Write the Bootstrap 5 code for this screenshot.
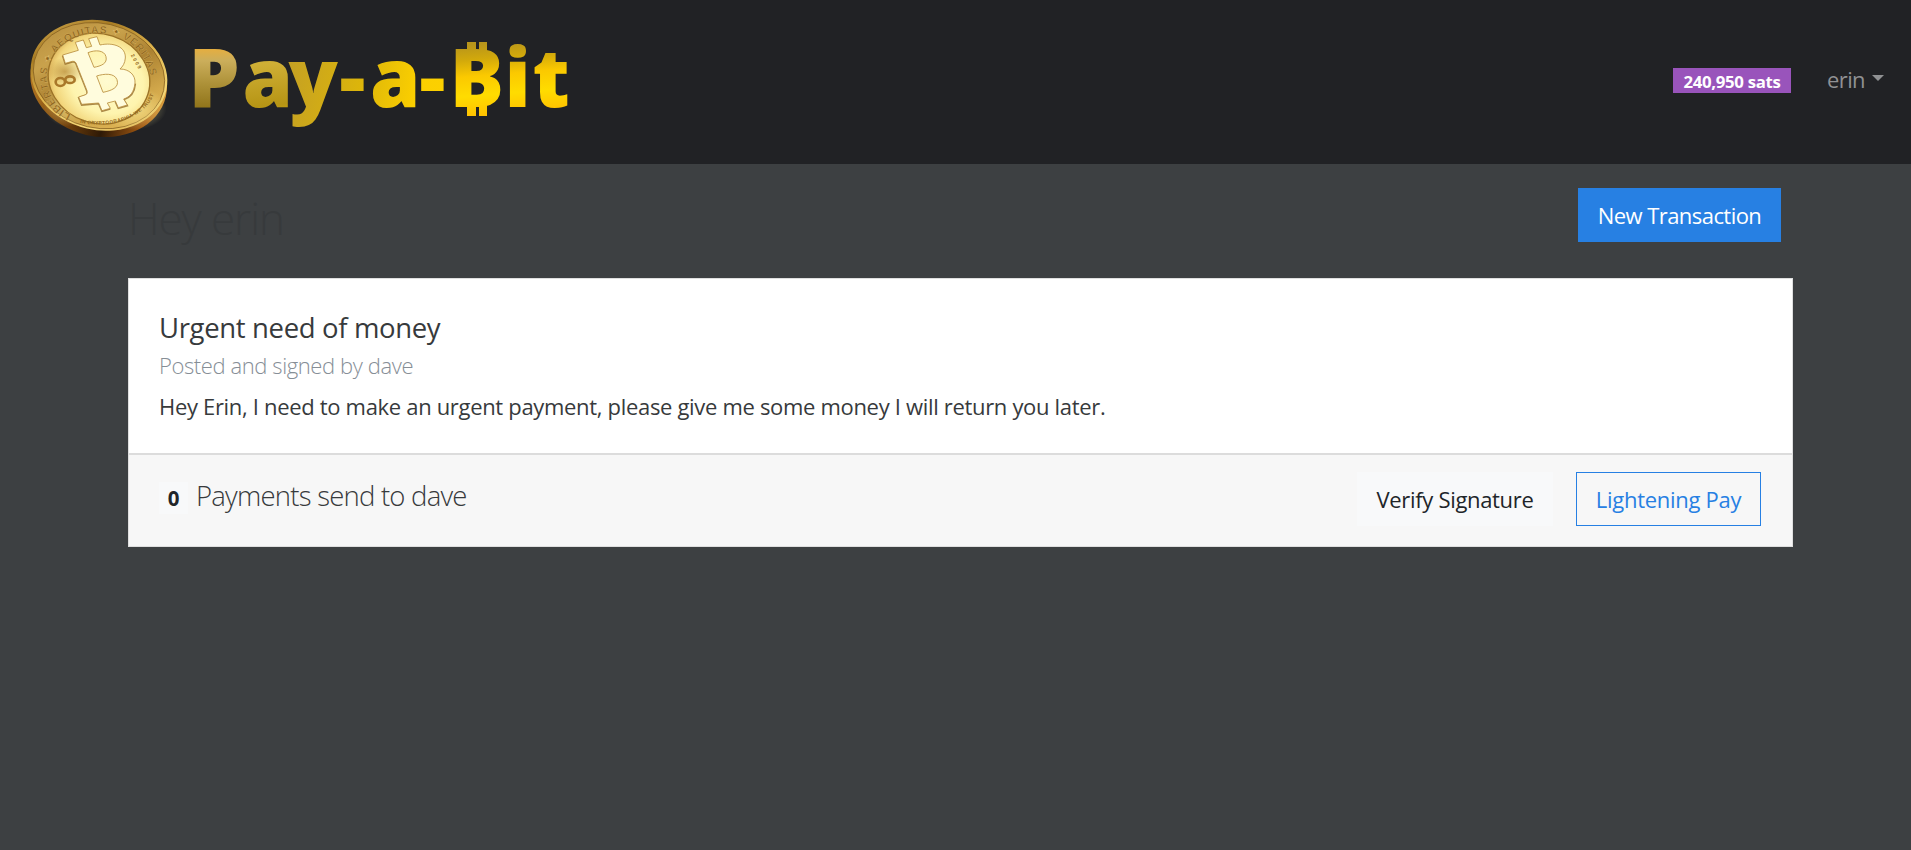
<!DOCTYPE html>
<html lang="en">
<head>
<meta charset="utf-8">
<meta name="viewport" content="width=device-width, initial-scale=1">
<title>Pay-a-Bit</title>
<link href="https://cdn.jsdelivr.net/npm/bootstrap@5.3.0/dist/css/bootstrap.min.css" rel="stylesheet">
<style>
body{background:#3d4042;color:#373a3c;font-family:"Open Sans","Noto Sans",sans-serif;font-size:22.5px;line-height:1.5;min-height:100vh}
.topbar{height:164px;background:#212225}
.topbar svg{display:block}
.sats{background:#9954bb;border-radius:0;width:118px;height:25px;font-size:16.8px;font-weight:700;line-height:25px;padding:1px 0 0;letter-spacing:-.3px;margin:0 36px 3px 0}
.user-link{color:#909193;letter-spacing:-.6px;font-size:22px;line-height:34px;margin:0 27px 6px 0}
.user-link::after{margin-left:7px;border-top-width:6.5px;border-left-width:6.5px;border-right-width:6.5px;vertical-align:7px}
.main-wrap{width:1665px;margin-left:128px}
.greeting{font-size:44px;font-weight:300;line-height:60px;height:54px;color:#373a3c;letter-spacing:-1.1px}
.btn{--bs-btn-border-radius:0;font-size:22px;line-height:34px;height:54px;padding:9px 0;white-space:nowrap}
.btn-new{width:203px;background:#2780e3;color:#fff;letter-spacing:-.55px;margin-right:12px}
.btn-verify{width:196px;background:#f8f9fa;color:#212529;letter-spacing:-.32px;margin-right:23px}
.btn-pay{width:185px;border:1px solid #2780e3;color:#2780e3;letter-spacing:-.28px}
.post{border-radius:0;border:1px solid #dfdfdf;height:269px;margin-top:36px}
.post .card-body{padding:32px 30px 0}
.post-title{font-size:27.5px;font-weight:400;line-height:34px;margin:0;letter-spacing:-.35px}
.post-sub{font-size:22px;font-weight:300;line-height:28px;color:#868e96;letter-spacing:-.4px;margin:6px 0 0}
.post-text{font-size:22px;line-height:34px;letter-spacing:-.32px;margin:10px 0 0}
.post .card-footer{height:93px;background:#f7f7f7;border-top:2px solid #dcdcdc;border-radius:0;padding:0 31px 3px 30px}
.count{background:#f8f9fa;color:#212529;border-radius:0;width:29px;height:32px;font-size:20.5px;line-height:32px;padding:0;margin:0 8px 2px 0}
.pay-label{font-size:27.5px;font-weight:300;line-height:34px;letter-spacing:-.77px;margin-top:-6px}
.logo-word{font:900 81px "Noto Sans","Open Sans",sans-serif}
.coin-ring{font:700 31px "Liberation Sans",sans-serif}
.coin-small{font:700 15px "Liberation Sans",sans-serif}
</style>
</head>
<body>
<nav class="topbar d-flex align-items-center">
  <a href="#" class="me-auto" aria-label="Pay-a-Bit">
  <svg width="600" height="164" viewBox="0 0 600 164">
    <defs>
      <linearGradient id="rim" x1="0" y1="0" x2="1" y2="1"><stop offset="0" stop-color="#d8b35a"/><stop offset=".25" stop-color="#a87c24"/><stop offset=".5" stop-color="#e0b64e"/><stop offset=".75" stop-color="#f5d878"/><stop offset="1" stop-color="#c9912d"/></linearGradient>
      <linearGradient id="ring" x1="0" y1="0" x2="1" y2="1"><stop offset="0" stop-color="#b3893a"/><stop offset=".3" stop-color="#c9a24c"/><stop offset=".5" stop-color="#ac8232"/><stop offset=".75" stop-color="#d5ab4d"/><stop offset="1" stop-color="#e8be5c"/></linearGradient>
      <linearGradient id="edge" x1="0" x2="1"><stop offset="0" stop-color="#b47722"/><stop offset=".35" stop-color="#70400c"/><stop offset=".6" stop-color="#2e1906"/><stop offset=".9" stop-color="#a85c12"/><stop offset="1" stop-color="#d89a38"/></linearGradient>
      <radialGradient id="face" cx=".58" cy=".5" r=".6"><stop offset="0" stop-color="#fffbd0"/><stop offset=".6" stop-color="#fef4ae"/><stop offset=".88" stop-color="#f2d67c"/><stop offset="1" stop-color="#d9ad55"/></radialGradient>
      <radialGradient id="shade"><stop offset="0" stop-color="#a8741f" stop-opacity=".6"/><stop offset="1" stop-color="#a8741f" stop-opacity="0"/></radialGradient>
      <radialGradient id="glow"><stop offset="0" stop-color="#fff3a0" stop-opacity=".9"/><stop offset="1" stop-color="#fff3a0" stop-opacity="0"/></radialGradient>
      <linearGradient id="gold" gradientUnits="userSpaceOnUse" x1="194" y1="48" x2="566" y2="110"><stop offset="0" stop-color="#c8a64e"/><stop offset=".25" stop-color="#c4a024"/><stop offset=".45" stop-color="#dcb50b"/><stop offset=".6" stop-color="#fbcf00"/><stop offset="1" stop-color="#ffd400"/></linearGradient>
      <linearGradient id="goldP" x1="218" y1="49" x2="218" y2="107" gradientUnits="userSpaceOnUse"><stop offset="0" stop-color="#e5ae40"/><stop offset=".2" stop-color="#cbae5b"/><stop offset=".6" stop-color="#ad9138"/><stop offset="1" stop-color="#91751b"/></linearGradient>
      <linearGradient id="goldB" x1="505" y1="42" x2="511" y2="117" gradientUnits="userSpaceOnUse"><stop offset="0" stop-color="#b8951b"/><stop offset=".2" stop-color="#d2a90b"/><stop offset=".42" stop-color="#fbc900"/><stop offset=".68" stop-color="#ffdc00"/><stop offset="1" stop-color="#ffbd00"/></linearGradient>
      <linearGradient id="golda" x1="265" y1="64" x2="270" y2="123" gradientUnits="userSpaceOnUse"><stop offset="0" stop-color="#cfaf35"/><stop offset=".7" stop-color="#b69515"/><stop offset="1" stop-color="#dbb00a"/></linearGradient>
      <path id="ringPath" d="M213 343C156 318 139 262 141 220C150 149 214 102 292 99C380 99 444 154 458 262"/>
      <path id="smallPath" d="M240 368C335 389 445 352 466 270"/>
    </defs>
    <g transform="scale(.33333)">
      <ellipse cx="296" cy="243" rx="207" ry="166" transform="rotate(13 296 243)" fill="url(#edge)"/>
      <ellipse cx="297" cy="226" rx="207" ry="164" transform="rotate(13 297 226)" fill="url(#rim)"/>
      <ellipse cx="297" cy="227" rx="199" ry="157" transform="rotate(13 297 227)" fill="url(#ring)" stroke="#7d581b" stroke-width="2"/>
      <ellipse cx="400" cy="325" rx="100" ry="65" fill="url(#glow)" opacity=".7"/>
      <ellipse cx="200" cy="310" rx="70" ry="70" fill="url(#glow)" opacity=".6"/>
      <ellipse cx="297" cy="236" rx="154" ry="134" transform="rotate(18 297 236)" fill="url(#face)" stroke="#9b7227" stroke-width="4"/>
      <ellipse cx="195" cy="215" rx="56" ry="42" fill="url(#shade)"/>
      <text class="coin-ring" fill="#8a6420" stroke="#e3c06c" stroke-width=".8"><textPath href="#ringPath" textLength="585" lengthAdjust="spacing">LIBERTAS ✦ AEQUITAS ✦ VERITAS</textPath></text>
      <text class="coin-small" fill="#94671a"><textPath href="#smallPath" textLength="255" lengthAdjust="spacing">IN CRYPTOGRAPHIA WE TRUST</textPath></text>
      <text class="coin-small" fill="#94671a" transform="translate(392 166) rotate(60)" textLength="48">2009</text>
      <g fill="none" stroke="#a9782a" stroke-width="8"><ellipse cx="181" cy="246" rx="14" ry="12"/><ellipse cx="210" cy="239" rx="14" ry="10"/></g>
      <path fill="none" stroke="#8d6425" stroke-opacity=".75" stroke-width="5" d="M188 167L196 192L217 186Q225 184 228 191L261 274Q264 283 257 286L236 293L245 315L296 311L306 334L331 327M346 305L355 325L382 317L371 299C390 293 404 277 406 251"/>
      <path fill-rule="evenodd" fill="#fffcdd" stroke="#b88d3c" stroke-width="2.5" stroke-linejoin="round" d="M188 165L235 151L226 127L250 120L259 143L275 139L266 116L291 110L300 135C340 126 378 140 376 174C375 190 368 200 360 207C387 207 407 225 405 249C402 277 390 291 371 297L382 315L355 323L346 303L322 309L331 325L306 332L296 309L245 313L236 291L257 284Q264 281 261 272L228 189Q225 182 217 184L196 190ZM264 158L282 202C303 198 323 191 318 170C313 150 286 149 264 158ZM290 228L309 277C334 272 359 263 351 239C343 218 312 221 290 228Z"/>
    </g>
    <text class="logo-word" y="107" x="188.5 242.5 288.5 339.5 370 419.5 449.5 504.5 532.5" fill="url(#gold)"><tspan fill="url(#goldP)">P</tspan><tspan fill="url(#golda)">a</tspan>y-a-<tspan fill="url(#goldB)">Bit</tspan></text>
    <path fill="url(#goldB)" d="M467 42h9v9h-9zM479 42h8v9h-8zM467 105h9v11h-9zM479 105h8v11h-8z"/>
  </svg>
  </a>
  <span class="badge sats">240,950 sats</span>
  <a href="#" class="user-link dropdown-toggle text-decoration-none">erin</a>
</nav>
<main class="main-wrap pt-4">
  <div class="d-flex justify-content-between">
    <h1 class="greeting m-0">Hey erin</h1>
    <button class="btn btn-new">New Transaction</button>
  </div>
  <article class="card post">
    <div class="card-body">
      <h4 class="post-title">Urgent need of money</h4>
      <h6 class="post-sub">Posted and signed by dave</h6>
      <p class="post-text">Hey Erin, I need to make an urgent payment, please give me some money I will return you later.</p>
    </div>
    <div class="card-footer d-flex align-items-center">
      <span class="badge count">0</span>
      <span class="pay-label me-auto">Payments send to dave</span>
      <button class="btn btn-verify">Verify Signature</button>
      <button class="btn btn-pay">Lightening Pay</button>
    </div>
  </article>
</main>
<script src="https://cdn.jsdelivr.net/npm/bootstrap@5.3.0/dist/js/bootstrap.bundle.min.js"></script>
</body>
</html>
